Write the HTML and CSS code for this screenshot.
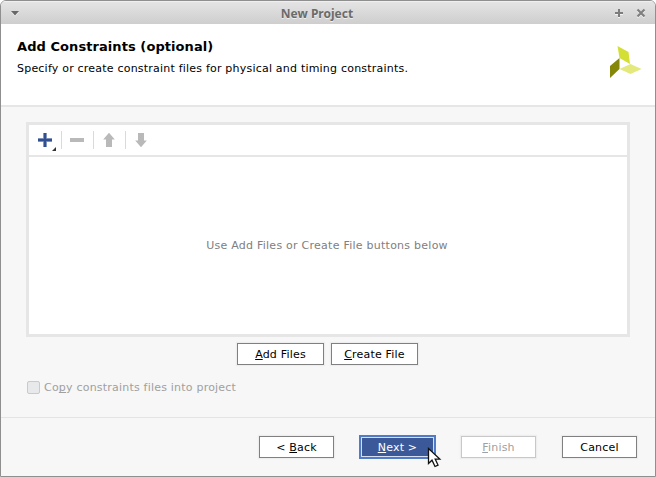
FILE: index.html
```html
<!DOCTYPE html>
<html lang="en">
<head>
<meta charset="utf-8">
<title>New Project</title>
<link rel="stylesheet" href="styles.css">
</head>
<body>
<div class="window">
  <div class="titlebar">
    <svg class="tb-menu" width="10" height="8" viewBox="0 0 10 8"><path d="M1 3h8L5 7.500z" fill="#fff" opacity=".6"/><path d="M1 2h8L5 6.500z" fill="#686868"/></svg>
    <span class="title">New Project</span>
    <svg class="tb-max" width="10" height="10" viewBox="0 0 10 10"><path d="M1 6h8M5 2v8" stroke="#f4f4f4" stroke-width="2"/><path d="M1 5h8M5 1v8" stroke="#7c7c7c" stroke-width="2"/></svg>
    <svg class="tb-close" width="10" height="10" viewBox="0 0 10 10"><path d="M1.500 2.500l7 7m0-7l-7 7" stroke="#f4f4f4" stroke-width="2"/><path d="M1.500 1.500l7 7m0-7l-7 7" stroke="#808080" stroke-width="2.200"/></svg>
  </div>
  <header class="header">
    <div>
      <h1>Add Constraints (optional)</h1>
      <p>Specify or create constraint files for physical and timing constraints.</p>
    </div>
    <svg class="logo" width="34" height="34" viewBox="0 0 34 34"><path d="M8.500 1L19.500 7L21 19L10.500 13z" fill="#d3df35"/><path d="M10.500 13V24L1 33V21z" fill="#858709"/><path d="M10.500 24L21.500 19L32.500 24L21.500 29z" fill="#e3e97c"/></svg>
  </header>
  <main class="content">
    <section class="panel">
      <div class="toolbar">
        <div class="tool"><svg width="32" height="30" viewBox="0 0 32 30"><path d="M9 15h14M16 8v14" stroke="#99a8c9" stroke-width="4"/><path d="M9 15h14M16 8v14" stroke="#30508f" stroke-width="2.400"/><path d="M27 22v4h-4z" fill="#333"/></svg></div>
        <div class="tool"><svg width="31" height="30" viewBox="0 0 31 30"><path d="M8 15h14" stroke="#b9b9b9" stroke-width="4"/></svg></div>
        <div class="tool"><svg width="31" height="30" viewBox="0 0 31 30"><path d="M15 7.800l5.800 6.700H18V22h-6v-7.500H9.200z" fill="#b9b9b9"/></svg></div>
        <div class="tool"><svg width="31" height="30" viewBox="0 0 31 30"><path d="M15 22.200l5.800-6.700H18V8h-6v7.500H9.200z" fill="#b9b9b9"/></svg></div>
      </div>
      <div class="empty">Use Add Files or Create File buttons below</div>
    </section>
    <div class="actions">
      <button class="btn wide add"><span><u>A</u>dd Files</span></button>
      <button class="btn wide create"><span><u>C</u>reate File</span></button>
    </div>
    <label class="check"><span class="box"></span><span class="check-text">Co<u>p</u>y constraints files into project</span></label>
  </main>
  <footer class="footer">
    <button class="btn back"><span>&lt; <u>B</u>ack</span></button>
    <button class="btn next"><span><u>N</u>ext &gt;</span></button>
    <button class="btn finish"><span><u>F</u>inish</span></button>
    <button class="btn cancel"><span>Cancel</span></button>
  </footer>
</div>
<svg class="cursor" width="15" height="22" viewBox="0 0 15 22"><path d="M1.500 1.500v15l3.500-3.300 3 6.300 3-1.400-2.800-6h4.600z" fill="#fff" stroke="#111" stroke-width="1.300"/></svg>
</body>
</html>
```
FILE: styles.css
```css
* { box-sizing: border-box; }
body { margin: 0; background: #fff; font: 11px/14px "DejaVu Sans", sans-serif; color: #000; }
svg { display: block; }
u { text-decoration: underline; text-decoration-thickness: 1px; text-underline-offset: 1px; text-decoration-skip-ink: none; }
.window { width: 656px; height: 477px; border: 1px solid #8f8f8f; border-radius: 6px 6px 0 0; background: #f7f7f7; overflow: hidden; display: flex; flex-direction: column; }
.titlebar { height: 23px; flex: none; display: flex; align-items: center; padding: 1px 9px 0; background: linear-gradient(#e5e5e5, #cecece); box-shadow: inset 0 1px #efefef; }
.title { flex: 1; text-align: center; font: bold 12px/20px "Noto Sans", sans-serif; color: #6b6b6b; text-shadow: 0 1px #eee; padding-top: 1px; }
.tb-max { margin-right: 12px; }
.header { height: 83px; flex: none; background: #fff; border-bottom: 2px solid #e6e6e6; display: flex; justify-content: space-between; padding: 15px 12px 0 16px; }
h1 { margin: 0; font-size: 13px; line-height: 16px; letter-spacing: .07px; }
.header p { margin: 7px 0 0; letter-spacing: .21px; }
.logo { margin-top: 6px; }
.content { flex: 1; padding: 15px 25px 0; }
.panel { height: 215px; border: 3px solid #e6e6e6; background: #fff; display: flex; flex-direction: column; }
.toolbar { height: 32px; border-bottom: 2px solid #e6e6e6; display: flex; }
.tool { display: flex; }
.tool + .tool { border-left: 1px solid #dadada; margin: 6px 0; height: 18px; }
.tool + .tool svg { margin-top: -6px; }
.empty { flex: 1; display: flex; align-items: center; justify-content: center; color: #808080; letter-spacing: .25px; padding-right: 2px; }
.actions { display: flex; justify-content: center; gap: 7px; margin: 6px 1px 0 0; }
.btn { height: 22px; width: 75px; padding: 1px 0 0; border: 1px solid #808080; background: #fff; font: inherit; color: #000; letter-spacing: .2px; box-shadow: 0 0 1px 1px #eee; }
.btn.wide { width: 87px; }
.check { display: flex; align-items: center; gap: 4px; margin: 15px 0 0 1px; color: #a0a0a0; letter-spacing: .21px; }
.check-text { padding-top: 1px; margin-bottom: -1px; }
.box { width: 13px; height: 13px; border: 1px solid #c8cacb; border-radius: 2px; background: #e8e9ea; }
.footer { height: 59px; flex: none; border-top: 1px solid #e4e4e4; display: flex; align-items: flex-start; padding: 18px 18px 0 258px; }
.btn.next { width: 77px; height: 24px; margin: -1px 25px 0; border: 2px solid #4f7bc8; background: #3b5998; color: #fff; box-shadow: inset 0 0 0 1px #d6dff0; }
.btn.finish { border-color: #c8c8c8; color: #a0a0a0; margin-right: 26px; }
.cursor { position: absolute; left: 427px; top: 447px; }
```
